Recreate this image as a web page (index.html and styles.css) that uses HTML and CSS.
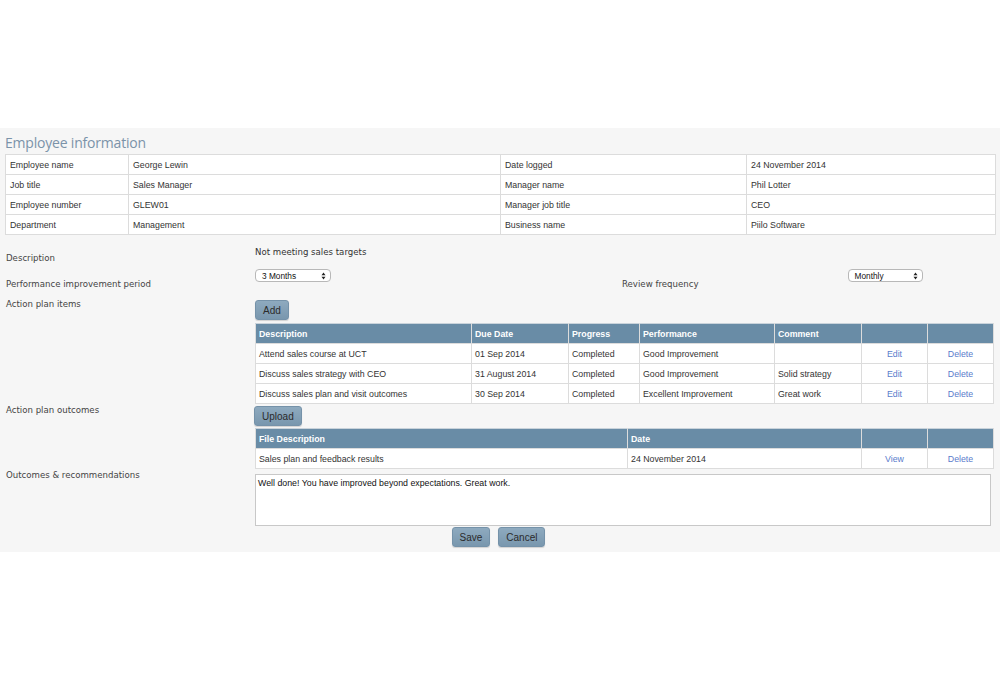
FILE: index.html
```html
<!DOCTYPE html>
<html>
<head>
<meta charset="utf-8">
<link rel="stylesheet" href="styles.css">
</head>
<body>
<div class="panel">
  <h1 class="title">Employee information</h1>
  <table class="info">
    <colgroup><col class="c1"><col class="c2"><col class="c3"><col class="c4"></colgroup>
    <tr><td>Employee name</td><td>George Lewin</td><td>Date logged</td><td>24 November 2014</td></tr>
    <tr><td>Job title</td><td>Sales Manager</td><td>Manager name</td><td>Phil Lotter</td></tr>
    <tr><td>Employee number</td><td>GLEW01</td><td>Manager job title</td><td>CEO</td></tr>
    <tr><td>Department</td><td>Management</td><td>Business name</td><td>Piilo Software</td></tr>
  </table>

  <div class="row row-desc">
    <div class="label">Description</div>
    <div class="field"><div class="value">Not meeting sales targets</div></div>
  </div>

  <div class="row row-period">
    <div class="label">Performance improvement period</div>
    <div class="field period">
      <div class="select s-period"><span>3 Months</span><svg width="5" height="8" viewBox="0 0 5 8"><path d="M0.5 3.2 L2.5 0.6 L4.5 3.2 Z M0.5 4.8 L2.5 7.4 L4.5 4.8 Z" fill="#222"/></svg></div>
      <div class="label review">Review frequency</div>
      <div class="select s-freq"><span>Monthly</span><svg width="5" height="8" viewBox="0 0 5 8"><path d="M0.5 3.2 L2.5 0.6 L4.5 3.2 Z M0.5 4.8 L2.5 7.4 L4.5 4.8 Z" fill="#222"/></svg></div>
    </div>
  </div>

  <div class="row row-items">
    <div class="label">Action plan items</div>
    <div class="field">
      <button class="btn btn-add">Add</button>
      <table class="grid">
        <colgroup><col style="width:216px"><col style="width:97px"><col style="width:71px"><col style="width:135px"><col style="width:87px"><col style="width:66px"><col style="width:66px"></colgroup>
        <tr><th>Description</th><th>Due Date</th><th>Progress</th><th>Performance</th><th>Comment</th><th></th><th></th></tr>
        <tr><td>Attend sales course at UCT</td><td>01 Sep 2014</td><td>Completed</td><td>Good Improvement</td><td></td><td class="act"><a>Edit</a></td><td class="act"><a>Delete</a></td></tr>
        <tr><td>Discuss sales strategy with CEO</td><td>31 August 2014</td><td>Completed</td><td>Good Improvement</td><td>Solid strategy</td><td class="act"><a>Edit</a></td><td class="act"><a>Delete</a></td></tr>
        <tr><td>Discuss sales plan and visit outcomes</td><td>30 Sep 2014</td><td>Completed</td><td>Excellent Improvement</td><td>Great work</td><td class="act"><a>Edit</a></td><td class="act"><a>Delete</a></td></tr>
      </table>
    </div>
  </div>

  <div class="row row-outcomes">
    <div class="label">Action plan outcomes</div>
    <div class="field">
      <button class="btn btn-upload">Upload</button>
      <table class="grid">
        <colgroup><col style="width:372px"><col style="width:234px"><col style="width:66px"><col style="width:66px"></colgroup>
        <tr><th>File Description</th><th>Date</th><th></th><th></th></tr>
        <tr><td>Sales plan and feedback results</td><td>24 November 2014</td><td class="act"><a>View</a></td><td class="act"><a>Delete</a></td></tr>
      </table>
    </div>
  </div>

  <div class="row row-recs">
    <div class="label">Outcomes &amp; recommendations</div>
    <div class="field">
      <div class="textarea">Well done! You have improved beyond expectations. Great work.</div>
    </div>
  </div>

  <div class="actions">
    <button class="btn">Save</button>
    <button class="btn">Cancel</button>
  </div>
</div>
</body>
</html>
```

FILE: styles.css
```css
html, body {
  margin: 0;
  padding: 0;
  background: #ffffff;
}
.panel {
  margin-top: 128px;
  background: #f6f6f6;
  padding: 5px 5px 5px 5px;
  height: 424px;
  box-sizing: border-box;
}
.title {
  margin: 0;
  height: 21px;
  font-family: "Open Sans", sans-serif;
  font-weight: 400;
  font-size: 14px;
  letter-spacing: -0.2px;
  line-height: 19px;
  color: #7b93a9;
}
table {
  border-collapse: collapse;
  table-layout: fixed;
  font-family: "Liberation Sans", Arial, sans-serif;
  font-size: 8.8px;
  color: #333;
}
.info {
  width: 990px;
  background: #fff;
}
.info .c1 { width: 123px; }
.info .c2 { width: 372px; }
.info .c3 { width: 246px; }
.info .c4 { width: 249px; }
.info td {
  border: 1px solid #dcdcdc;
  height: 20px;
  padding: 0 0 0 4px;
  box-sizing: border-box;
  white-space: nowrap;
}
.row {
  display: flex;
  align-items: flex-start;
}
.label {
  width: 249px;
  padding-left: 1px;
  font-family: "DejaVu Sans", Verdana, sans-serif;
  font-size: 8.6px;
  line-height: 12px;
  color: #444;
  flex: none;
}
.field {
  flex: 1;
}
.row-desc { margin-top: 11px; height: 21px; }
.row-desc .label { margin-top: 6px; }
.value {
  font-family: "DejaVu Sans", Verdana, sans-serif;
  font-size: 8.6px;
  line-height: 12px;
  color: #333;
}
.row-period { height: 31px; }
.row-period > .label { margin-top: 11px; }
.period {
  display: flex;
  align-items: flex-start;
}
.select {
  display: flex;
  align-items: center;
  justify-content: space-between;
  box-sizing: border-box;
  height: 13px;
  margin-top: 2px;
  background: #fff;
  border: 1px solid #b8b8b8;
  border-radius: 4px;
  padding: 0 4px 0 6px;
  font-family: "Liberation Sans", Arial, sans-serif;
  font-size: 8.3px;
  color: #111;
}
.s-period { width: 76px; }
.s-freq { width: 75px; }
.review {
  width: auto;
  margin-left: 291px;
  margin-top: 11px;
  padding-left: 0;
}
.s-freq { margin-left: 149px; }
.row-items { height: 106px; }
.row-items .label { margin-top: 0; }
.btn {
  display: block;
  box-sizing: border-box;
  height: 20px;
  padding: 0 7px;
  border: 1px solid #7592a9;
  border-radius: 3px;
  background: linear-gradient(#8eaabf, #7997ae);
  box-shadow: 0 1px 1px rgba(0,0,0,0.15);
  font-family: "Liberation Sans", Arial, sans-serif;
  font-size: 10px;
  color: #2b2b2b;
}
.btn-add { margin: 2px 0 3px 0; }
.btn-upload { margin: 2px 0 2px -1px; }
.grid {
  width: 738px;
  background: #fff;
}
.grid th {
  background: #698ca6;
  color: #fff;
  font-weight: 700;
  text-align: left;
  height: 20px;
  padding: 0 0 0 3px;
  box-sizing: border-box;
  border: 1px solid #dcdcdc;
  border-top-color: #c9d3db;
  white-space: nowrap;
}
.grid th + th { border-left-color: #b5c5d2; }
.grid td {
  height: 20px;
  padding: 0 0 0 3px;
  box-sizing: border-box;
  border: 1px solid #dcdcdc;
  white-space: nowrap;
}
.grid td.act {
  text-align: center;
  padding: 0;
}
.grid a {
  color: #5a7ccc;
}
.row-outcomes { height: 65px; }
.row-recs .textarea {
  margin-top: 5px;
  width: 736px;
  height: 52px;
  box-sizing: border-box;
  background: #fff;
  border: 1px solid #c8c8c8;
  padding: 3px 2px;
  font-family: "Liberation Sans", Arial, sans-serif;
  font-size: 8.8px;
  line-height: 11px;
  color: #111;
}
.row-recs .label { margin-top: 0; }
.actions {
  display: flex;
  justify-content: center;
  gap: 8px;
  margin-top: 1px;
  padding-right: 3px;
}
```
